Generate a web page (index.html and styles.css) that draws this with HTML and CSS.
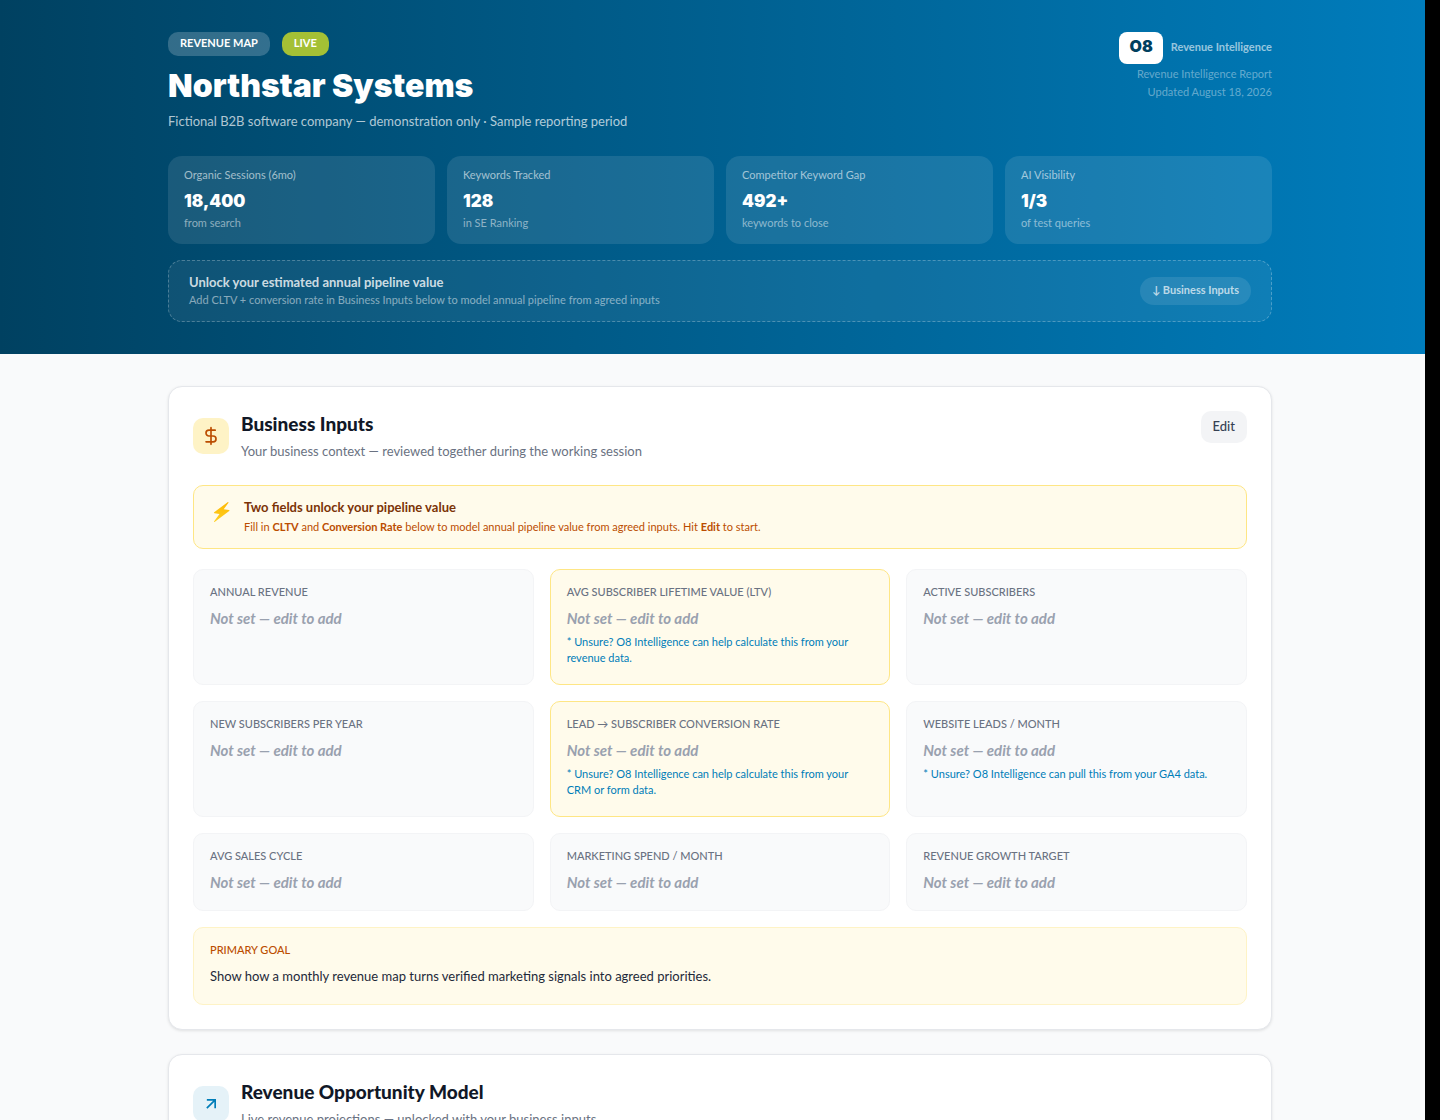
FILE: index.html
```
<!DOCTYPE html>
<html lang="en">
<head>
    <meta charset="UTF-8">
    <meta name="viewport" content="width=device-width, initial-scale=1.0">
    <title>Northstar Systems - Revenue Map</title>
    <link rel="stylesheet" href="styles.css">
</head>
<body>
    <header class="hero">
        <div class="container">
            <div class="hero-top">
                <div>
                    <div class="badges">
                        <span class="badge">REVENUE MAP</span>
                        <span class="badge badge-live">LIVE</span>
                    </div>
                    <h1>Northstar Systems</h1>
                    <p class="hero-subtitle">Fictional B2B software company — demonstration only · Sample reporting period</p>
                </div>
                <div class="brand">
                    <div class="brand-row">
                        <span class="brand-logo">O8</span>
                        <span class="brand-name">Revenue Intelligence</span>
                    </div>
                    <p>Revenue Intelligence Report</p>
                    <p>Updated August 18, 2026</p>
                </div>
            </div>

            <div class="stats">
                <div class="stat">
                    <div class="stat-label">Organic Sessions (6mo)</div>
                    <div class="stat-value">18,400</div>
                    <div class="stat-note">from search</div>
                </div>
                <div class="stat">
                    <div class="stat-label">Keywords Tracked</div>
                    <div class="stat-value">128</div>
                    <div class="stat-note">in SE Ranking</div>
                </div>
                <div class="stat">
                    <div class="stat-label">Competitor Keyword Gap</div>
                    <div class="stat-value">492+</div>
                    <div class="stat-note">keywords to close</div>
                </div>
                <div class="stat">
                    <div class="stat-label">AI Visibility</div>
                    <div class="stat-value">1/3</div>
                    <div class="stat-note">of test queries</div>
                </div>
            </div>

            <div class="unlock">
                <div class="unlock-body">
                    <div class="unlock-title">Unlock your estimated annual pipeline value</div>
                    <div class="unlock-text">Add CLTV + conversion rate in Business Inputs below to model annual pipeline from agreed inputs</div>
                </div>
                <a class="unlock-link" href="#business-inputs">↓ Business Inputs</a>
            </div>
        </div>
    </header>

    <main class="container content">
        <section class="card" id="business-inputs">
            <div class="card-header">
                <div class="card-heading">
                    <span class="card-icon icon-amber">
                        <svg width="20" height="20" viewBox="0 0 24 24" fill="none" stroke="currentColor" stroke-width="2" stroke-linecap="round" stroke-linejoin="round">
                            <path d="M12 2v20M17 5H9.5a3.5 3.5 0 0 0 0 7h5a3.5 3.5 0 0 1 0 7H6"/>
                        </svg>
                    </span>
                    <div>
                        <h2>Business Inputs</h2>
                        <p class="card-subtitle">Your business context — reviewed together during the working session</p>
                    </div>
                </div>
                <button class="edit-button" type="button">Edit</button>
            </div>

            <div class="notice">
                <svg class="bolt" width="22" height="24" viewBox="0 0 22 24">
                    <defs>
                        <linearGradient id="bolt-fill" x1="0" y1="0" x2="0" y2="1">
                            <stop offset="0" stop-color="#feb804"/>
                            <stop offset="1" stop-color="#fed022"/>
                        </linearGradient>
                    </defs>
                    <path d="M17.6 2.2 4.2 12.2c-.5.4-.3.9.2 1l5.100.7-5.300 7.300c-.4.7.1 1 .7.6L19.200 11c.5-.4.3-.8-.2-.9l-5.300-.8 4.600-6.400c.4-.6-.1-1.100-.7-.7z" fill="url(#bolt-fill)"/>
                </svg>
                <div>
                    <div class="notice-title">Two fields unlock your pipeline value</div>
                    <div class="notice-text">Fill in <strong>CLTV</strong> and <strong>Conversion Rate</strong> below to model annual pipeline value from agreed inputs. Hit <strong>Edit</strong> to start.</div>
                </div>
            </div>

            <div class="fields">
                <div class="field">
                    <div class="field-label">ANNUAL REVENUE</div>
                    <div class="field-empty">Not set — edit to add</div>
                </div>
                <div class="field field-key">
                    <div class="field-label">AVG SUBSCRIBER LIFETIME VALUE (LTV)</div>
                    <div class="field-empty">Not set — edit to add</div>
                    <div class="field-hint">* Unsure? O8 Intelligence can help calculate this from your revenue data.</div>
                </div>
                <div class="field">
                    <div class="field-label">ACTIVE SUBSCRIBERS</div>
                    <div class="field-empty">Not set — edit to add</div>
                </div>
                <div class="field">
                    <div class="field-label">NEW SUBSCRIBERS PER YEAR</div>
                    <div class="field-empty">Not set — edit to add</div>
                </div>
                <div class="field field-key">
                    <div class="field-label">LEAD → SUBSCRIBER CONVERSION RATE</div>
                    <div class="field-empty">Not set — edit to add</div>
                    <div class="field-hint">* Unsure? O8 Intelligence can help calculate this from your CRM or form data.</div>
                </div>
                <div class="field">
                    <div class="field-label">WEBSITE LEADS / MONTH</div>
                    <div class="field-empty">Not set — edit to add</div>
                    <div class="field-hint">* Unsure? O8 Intelligence can pull this from your GA4 data.</div>
                </div>
                <div class="field">
                    <div class="field-label">AVG SALES CYCLE</div>
                    <div class="field-empty">Not set — edit to add</div>
                </div>
                <div class="field">
                    <div class="field-label">MARKETING SPEND / MONTH</div>
                    <div class="field-empty">Not set — edit to add</div>
                </div>
                <div class="field">
                    <div class="field-label">REVENUE GROWTH TARGET</div>
                    <div class="field-empty">Not set — edit to add</div>
                </div>
                <div class="field field-goal">
                    <div class="field-label">PRIMARY GOAL</div>
                    <div class="field-value">Show how a monthly revenue map turns verified marketing signals into agreed priorities.</div>
                </div>
            </div>
        </section>

        <section class="card">
            <div class="card-header">
                <div class="card-heading">
                    <span class="card-icon icon-blue">
                        <svg width="20" height="20" viewBox="0 0 24 24" fill="none" stroke="currentColor" stroke-width="2">
                            <path d="M7 17 17 7M7 7h10v10"/>
                        </svg>
                    </span>
                    <div>
                        <h2>Revenue Opportunity Model</h2>
                        <p class="card-subtitle">Live revenue projections — unlocked with your business inputs</p>
                    </div>
                </div>
            </div>
        </section>
    </main>

    <div class="scroll-track"></div>
</body>
</html>
```
FILE: styles.css
```
* {
    box-sizing: border-box;
}

body {
    margin: 0;
    font-family: Lato, "Liberation Sans", sans-serif;
    font-size: 13px;
    line-height: 20px;
    color: #111827;
    background: #f9fafb;
}

h1, h2, p {
    margin: 0;
}

.container {
    max-width: 1152px;
    margin: 0 auto;
    padding: 0 24px;
}

/* Hero */
.hero {
    padding: 32px 0;
    color: #fff;
    background: linear-gradient(to right, #004161, #005a87 40%, #007dbd);
}

.hero-top {
    display: flex;
    justify-content: space-between;
    align-items: flex-start;
    margin-bottom: 25px;
}

.badges {
    display: flex;
    gap: 12px;
    margin-bottom: 8px;
}

.badge {
    padding: 3px 12px 5px;
    font-size: 11px;
    font-weight: 700;
    line-height: 16px;
    border-radius: 10px;
    background: rgba(255, 255, 255, 0.2);
}

.badge-live {
    background: #a4c035;
}

h1 {
    font-family: Inter, Lato, sans-serif;
    font-size: 32px;
    font-weight: 900;
    line-height: 44px;
}

.hero-subtitle {
    margin-top: 3px;
    color: rgba(255, 255, 255, 0.7);
}

.brand {
    font-size: 11px;
    line-height: 18px;
    text-align: right;
    color: rgba(255, 255, 255, 0.4);
}

.brand-row {
    display: flex;
    justify-content: flex-end;
    gap: 8px;
    margin-bottom: 1px;
}

.brand-logo {
    padding: 0 10px 4px;
    font-family: Inter, Lato, sans-serif;
    font-size: 16px;
    font-weight: 900;
    line-height: 28px;
    border-radius: 8px;
    color: #00405f;
    background: #fff;
}

.brand-name {
    font-weight: 700;
    line-height: 30px;
    color: rgba(255, 255, 255, 0.6);
}

.stats {
    display: grid;
    grid-template-columns: repeat(4, 1fr);
    gap: 12px;
    margin-bottom: 16px;
}

.stat {
    padding: 11px 16px 13px;
    font-size: 11px;
    line-height: 16px;
    border-radius: 14px;
    background: rgba(255, 255, 255, 0.1);
}

.stat-label {
    color: rgba(255, 255, 255, 0.6);
}

.stat-value {
    margin: 4px 0 0;
    font-family: Inter, Lato, sans-serif;
    font-size: 17px;
    font-weight: 900;
    line-height: 28px;
}

.stat-note {
    color: rgba(255, 255, 255, 0.5);
}

.unlock {
    display: flex;
    justify-content: space-between;
    align-items: center;
    padding: 11px 20px;
    border: 1px dashed rgba(255, 255, 255, 0.25);
    border-radius: 14px;
    background: rgba(255, 255, 255, 0.06);
}

.unlock-body {
    padding-bottom: 2px;
}

.unlock-title {
    font-weight: 700;
    color: rgba(255, 255, 255, 0.8);
}

.unlock-text {
    font-size: 11px;
    line-height: 16px;
    color: rgba(255, 255, 255, 0.5);
}

.unlock-link {
    padding: 5px 12px 7px;
    font-size: 11px;
    font-weight: 700;
    line-height: 16px;
    border-radius: 14px;
    text-decoration: none;
    color: rgba(255, 255, 255, 0.7);
    background: rgba(255, 255, 255, 0.1);
}

/* Cards */
.content {
    display: flex;
    flex-direction: column;
    gap: 24px;
    padding-top: 32px;
    padding-bottom: 32px;
}

.card {
    padding: 24px;
    border: 1px solid #e5e7eb;
    border-radius: 14px;
    background: #fff;
    box-shadow: 0 1px 3px rgba(0, 0, 0, 0.1);
}

.card-header {
    display: flex;
    justify-content: space-between;
    align-items: flex-start;
    margin-bottom: 24px;
}

.card-heading {
    display: flex;
    align-items: center;
    gap: 12px;
}

.card-icon {
    display: flex;
    align-items: center;
    justify-content: center;
    width: 36px;
    height: 36px;
    border-radius: 10px;
}

.icon-amber {
    color: #bb4d00;
    background: #fef3c6;
}

.icon-blue {
    color: #007db8;
    background: #e5f2f8;
}

h2 {
    margin-bottom: 4px;
    font-size: 19px;
    font-weight: 900;
    line-height: 26px;
}

.card-subtitle {
    color: #6a7282;
}

.edit-button {
    padding: 5px 12px 7px;
    font-family: inherit;
    font-size: 13px;
    font-weight: 500;
    line-height: 20px;
    border: none;
    border-radius: 10px;
    color: #364153;
    background: #f3f4f6;
    cursor: pointer;
}

.notice {
    display: flex;
    gap: 12px;
    margin-bottom: 20px;
    padding: 11px 16px 13px;
    border: 1px solid #fee685;
    border-radius: 10px;
    color: #bb4d00;
    background: #fffbeb;
}

.bolt {
    margin-top: 3px;
}

.notice-title {
    font-weight: 700;
    color: #7b3306;
}

.notice-text {
    margin-top: 2px;
    font-size: 11px;
    line-height: 16px;
}

.fields {
    display: grid;
    grid-template-columns: repeat(3, 1fr);
    gap: 16px;
}

.field {
    padding: 14px 16px 16px;
    border: 1px solid #f3f4f6;
    border-radius: 10px;
    background: #f9fafb;
}

.field-key {
    border-color: #fee685;
    background: #fffbeb;
}

.field-label {
    margin-bottom: 6px;
    font-size: 11px;
    font-weight: 500;
    line-height: 16px;
    color: #6a7282;
}

.field-empty {
    font-size: 15px;
    font-weight: 700;
    font-style: italic;
    line-height: 24px;
    color: #99a1af;
}

.field-hint {
    margin: 4px 0 2px;
    font-size: 11px;
    line-height: 16px;
    color: #007db8;
}

.field-goal {
    grid-column: 1 / -1;
    border-color: #fef3c6;
    background: #fffbeb;
}

.field-goal .field-label {
    color: #bb4d00;
}

.field-value {
    line-height: 24px;
    color: #1e2939;
}

/* Gutter on the right edge of the window */
.scroll-track {
    position: fixed;
    top: 0;
    right: 0;
    bottom: 0;
    width: 15px;
    background: #000;
}
```
